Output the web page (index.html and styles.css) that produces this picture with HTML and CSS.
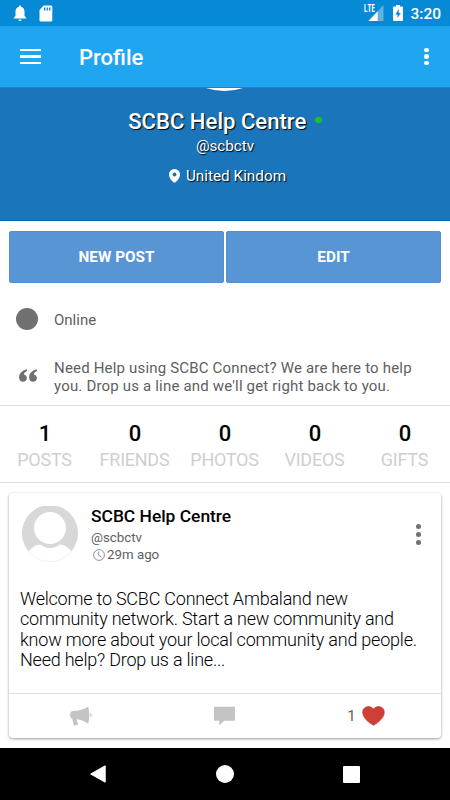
FILE: index.html
```
<!DOCTYPE html>
<html lang="en">
<head>
    <meta charset="UTF-8">
    <meta name="viewport" content="width=device-width, initial-scale=1.0">
    <title>Profile</title>
    <link rel="stylesheet" href="styles.css">
</head>
<body>
    <!-- Status bar -->
    <div class="status-bar">
        <svg class="bell" width="14" height="17" viewBox="0 0 14 17"><path fill="#fff" d="M7 .5c-.7 0-1.100.5-1.100 1.200C3.700 2.400 2.500 4.200 2.500 6.500V11L.7 12.700v.8h12.600v-.8L11.500 11V6.500c0-2.300-1.200-4.100-3.400-4.800C8.100 1 7.700.5 7 .5zM5.500 14.400a1.500 1.500 0 0 0 3 0z"/></svg>
        <svg class="sd" width="14" height="17" viewBox="0 0 14 17"><path fill="#fff" fill-rule="evenodd" d="M4.700.5h7.300q1.300 0 1.300 1.300v13.400q0 1.300-1.300 1.300H1.800q-1.300 0-1.300-1.300V5zM4.900 2.500v3h1.400v-3zM7.500 2.500v3h1.400v-3zM10 2.500v3h1.400v-3z"/></svg>
        <span class="spacer"></span>
        <span class="lte">LTE</span>
        <svg class="signal" width="16" height="16" viewBox="0 0 16 16"><path fill="#5fb3e2" d="M15.500 0v16H.500z"/><path fill="#fff" d="M9.700 6.200V16H.500z"/></svg>
        <svg class="battery" width="10" height="16" viewBox="0 0 10 16"><path fill="#fff" fill-rule="evenodd" d="M3 0h4v1.500h2q1 0 1 1V15q0 1-1 1H1q-1 0-1-1V2.500q0-1 1-1h2zM5.700 4L2.300 9.500h2.200V13L7.800 8H5.700z"/></svg>
        <span class="time">3:20</span>
    </div>

    <!-- App bar -->
    <div class="app-bar">
        <div class="menu"><i></i><i></i><i></i></div>
        <h1>Profile</h1>
        <div class="dots"><i></i><i></i><i></i></div>
    </div>

    <!-- Cover with user name and location -->
    <div class="cover">
        <div class="cover-avatar"></div>
        <h2>SCBC Help Centre<span class="online-dot"></span></h2>
        <p class="handle">@scbctv</p>
        <p class="location">
            <svg width="11" height="14" viewBox="0 0 11 14"><path fill="#fff" fill-rule="evenodd" d="M5.500 0A5.400 5.400 0 0 0 0 5.400C0 9 4 13.500 5.500 13.500S11 9 11 5.400A5.400 5.400 0 0 0 5.500 0zm0 3.600a2 2 0 1 1 0 4 2 2 0 0 1 0-4z"/></svg>
            United Kindom
        </p>
    </div>

    <div class="buttons">
        <button>NEW POST</button>
        <button>EDIT</button>
    </div>

    <div class="info online">
        <span class="circle"></span>
        <p>Online</p>
    </div>
    <div class="info bio">
        <svg width="18" height="13" viewBox="0 0 18 13"><path id="quote" fill="#707070" d="M8 .3C3.200 1.100.1 4.500.1 8.400c0 2.700 1.600 4.400 3.900 4.400 2.300 0 3.900-1.600 3.900-3.800 0-2-1.300-3.400-3.200-3.600.3-1.500 1.500-2.700 3.300-3.500z"/><use href="#quote" x="10"/></svg>
        <p>Need Help using SCBC Connect? We are here to help<br>you. Drop us a line and we'll get right back to you.</p>
    </div>

    <div class="stats">
        <div><b>1</b><span>POSTS</span></div>
        <div><b>0</b><span>FRIENDS</span></div>
        <div><b>0</b><span>PHOTOS</span></div>
        <div><b>0</b><span>VIDEOS</span></div>
        <div><b>0</b><span>GIFTS</span></div>
    </div>

    <!-- Post -->
    <div class="card">
        <div class="card-header">
            <svg class="avatar" width="56" height="56" viewBox="0 0 56 56">
                <circle cx="28" cy="28" r="27.600" fill="#fff" stroke="#eee" stroke-width=".8"/>
                <path fill="#d8d8d8" d="M6.700 45.200A28 28 0 1 1 49.300 45.200C46 41 42 38.500 37.600 38.400 31.500 43.300 24.500 43.300 18.400 38.400 14 38.500 10 41 6.700 45.200z"/>
                <circle cx="28" cy="22" r="16" fill="#fff"/>
            </svg>
            <div class="author">
                <h3>SCBC Help Centre</h3>
                <p>@scbctv</p>
                <p class="ago">
                    <svg width="12" height="12" viewBox="0 0 12 12"><circle cx="6" cy="6" r="5.400" fill="none" stroke="#777" stroke-width=".8"/><path d="M5.700 2.500V6.500L8.500 8" fill="none" stroke="#777" stroke-width=".8"/></svg>
                    29m ago
                </p>
            </div>
            <div class="dots dark"><i></i><i></i><i></i></div>
        </div>
        <p class="text">Welcome to SCBC Connect Ambaland new<br>community network. Start a new community and<br>know more about your local community and people.<br>Need help? Drop us a line...</p>
        <div class="actions">
            <div>
                <svg width="22" height="20" viewBox="0 0 22 20"><path fill="#c3c4c6" d="M18.200.5Q20.300 9 18.200 17.800C15 15.400 11 13.500 6.500 12.900L8.200 18.700 3.700 19.600 2.400 13C.8 12 0 10.800 0 9c0-2.100 1.200-3.800 3-3.900C9 5.100 14 3.300 18.200.5zM20.200 6.400q2.800 2.600.4 5.200z"/></svg>
            </div>
            <div>
                <svg width="22" height="20" viewBox="0 0 22 20"><path fill="#c3c4c6" d="M0 .7h21v14H10.200L5.200 19.500V14.700H0z"/></svg>
            </div>
            <div class="likes">
                <span>1</span>
                <svg width="23" height="20" viewBox="0 0 23 20"><path fill="#ce4037" stroke="#c82020" stroke-width=".6" d="M11.500 3.200C9.300-.4 3.700-.2 1.500 3.200-1.200 8.500 3.500 14.800 11.500 19.300 19.500 14.800 24.200 8.500 21.500 3.200 19.300-.2 13.700-.4 11.500 3.200z"/></svg>
            </div>
        </div>
    </div>

    <!-- Android navigation bar -->
    <div class="nav-bar">
        <svg width="16" height="18" viewBox="0 0 16 18"><path fill="#fff" stroke="#fff" stroke-linejoin="round" d="M15.200.8v16.400L.7 9z"/></svg>
        <svg width="18" height="18" viewBox="0 0 18 18"><circle cx="9" cy="9" r="9" fill="#fff"/></svg>
        <svg width="17" height="17" viewBox="0 0 17 17"><rect width="17" height="17" rx="1" fill="#fff"/></svg>
    </div>
</body>
</html>
```
FILE: styles.css
```
* {
    box-sizing: border-box;
}

body {
    font-family: Roboto, sans-serif;
    background-color: #ffffff;
    margin: 0;
    height: 800px;
    display: flex;
    flex-direction: column;
    overflow: hidden;
}

h1, h2, h3, p {
    margin: 0;
    font-weight: 400;
    white-space: nowrap;
}

svg {
    display: block;
    flex: none;
}

.status-bar {
    height: 26px;
    flex: none;
    display: flex;
    align-items: center;
    padding: 0 9px 0 13px;
    background-color: #078ad5;
    color: #ffffff;
}

.sd {
    margin-left: 12px;
}

.spacer {
    flex: 1;
}

.lte {
    font-family: "Open Sans", sans-serif;
    font-size: 10px;
    font-weight: 700;
    line-height: 9px;
    transform: scaleX(0.66);
    transform-origin: right;
    align-self: flex-start;
    margin-top: 4px;
    margin-right: -7px;
}

.battery {
    margin-left: 9px;
    margin-right: 7px;
}

.time {
    font-size: 15.500px;
    font-weight: 500;
    line-height: 26px;
    padding-top: 2px;
}

.app-bar {
    height: 61px;
    flex: none;
    display: flex;
    align-items: center;
    padding: 0 21.500px 0 20px;
    background-color: #20a5f1;
    color: #ffffff;
}

.menu {
    display: flex;
    flex-direction: column;
    gap: 4px;
}

.menu i {
    width: 21px;
    height: 2.500px;
    background-color: #ffffff;
}

.app-bar h1 {
    flex: 1;
    margin-left: 38px;
    padding-top: 2px;
    font-size: 22px;
    font-weight: 500;
}

.dots {
    display: flex;
    flex-direction: column;
    gap: 2px;
}

.dots i {
    width: 4.600px;
    height: 4.600px;
    border-radius: 50%;
    background-color: #ffffff;
}

.cover {
    position: relative;
    height: 134px;
    flex: none;
    overflow: hidden;
    background-color: #1b75bb;
    border-top: 1px solid #1a85cb;
    border-bottom: 1px solid #0463b3;
    color: #ffffff;
    text-align: center;
    text-shadow: 1px 1px 1px #000000;
}

.cover-avatar {
    position: absolute;
    left: 166px;
    top: -114px;
    width: 117px;
    height: 117px;
    border-radius: 50%;
    background-color: #ffffff;
}

.cover h2 {
    display: flex;
    justify-content: center;
    align-items: center;
    margin-top: 20px;
    font-size: 22.100px;
    font-weight: 500;
    line-height: 26px;
}

.online-dot {
    width: 6.500px;
    height: 6.500px;
    margin: 0 0 2px 9px;
    border-radius: 50%;
    background-color: #1fc01f;
}

.handle {
    margin-top: 3px;
    font-size: 15.200px;
    line-height: 18px;
}

.location {
    display: flex;
    justify-content: center;
    align-items: center;
    gap: 6px;
    margin-top: 12px;
    padding-left: 5px;
    font-size: 15.300px;
    line-height: 18px;
}

.buttons {
    display: flex;
    gap: 2px;
    padding: 10px 9px 0;
}

.buttons button {
    flex: 1;
    height: 52px;
    padding: 0;
    border: 1px solid #5090d3;
    border-radius: 2px;
    background-color: #5895d5;
    color: #ffffff;
    font-family: inherit;
    font-size: 15.300px;
    font-weight: 700;
}

.info {
    display: flex;
    align-items: center;
    color: #606060;
    font-size: 15px;
    line-height: 18px;
}

.online {
    height: 72px;
    padding-left: 16px;
}

.online p {
    padding-top: 2px;
}

.circle {
    width: 22px;
    height: 22px;
    margin-right: 16px;
    border-radius: 50%;
    background-color: #707070;
}

.bio {
    height: 50px;
    padding: 0 0 6px 19px;
    letter-spacing: 0.180px;
}

.bio svg {
    margin: -3px 17px 0 0;
}

.stats {
    display: flex;
    height: 78px;
    flex: none;
    padding-top: 14px;
    border-top: 1px solid #e2e2e2;
    border-bottom: 1px solid #e2e2e2;
}

.stats div {
    flex: 1;
    display: flex;
    flex-direction: column;
    align-items: center;
}

.stats b {
    font-size: 22px;
    font-weight: 500;
    line-height: 28px;
}

.stats span {
    padding-right: 1px;
    color: #cfcfcf;
    font-size: 18px;
    line-height: 24px;
    letter-spacing: -0.250px;
}

.card {
    display: flex;
    flex-direction: column;
    height: 245px;
    flex: none;
    margin: 10px 9px 0;
    border-radius: 4px;
    background-color: #ffffff;
    box-shadow: 0 1px 3px rgba(0, 0, 0, 0.4);
}

.card-header {
    display: flex;
    padding: 13px 20px 0 13px;
}

.author {
    flex: 1;
    margin-left: 13px;
    color: #606060;
    font-size: 13.300px;
    line-height: 18px;
}

.author h3 {
    margin-top: -1px;
    padding-bottom: 2px;
    color: #000000;
    font-size: 17.400px;
    font-weight: 500;
    line-height: 22px;
}

.ago {
    display: flex;
    align-items: center;
    gap: 2px;
    padding-left: 2px;
}

.author .ago {
    margin-top: -1px;
}

.dark {
    margin-top: 18px;
    gap: 2.800px;
}

.dark i {
    width: 5px;
    height: 5px;
    background-color: #707070;
}

.text {
    flex: 1;
    padding: 25px 0 0 11px;
    font-size: 18px;
    font-weight: 300;
    line-height: 20.400px;
    letter-spacing: -0.220px;
}

.actions {
    display: grid;
    grid-template-columns: repeat(3, 1fr);
    height: 45px;
    border-top: 1px solid #e2e2e2;
}

.actions div {
    display: flex;
    justify-content: center;
    align-items: center;
    padding-bottom: 1px;
}

.actions .likes {
    padding-right: 6px;
}

.likes span {
    margin-right: 6px;
    color: #606060;
    font-size: 15px;
    padding-top: 1px;
}

.nav-bar {
    display: flex;
    justify-content: space-between;
    align-items: center;
    height: 52px;
    flex: none;
    margin-top: auto;
    padding: 0 90px;
    background-color: #000000;
}
```
